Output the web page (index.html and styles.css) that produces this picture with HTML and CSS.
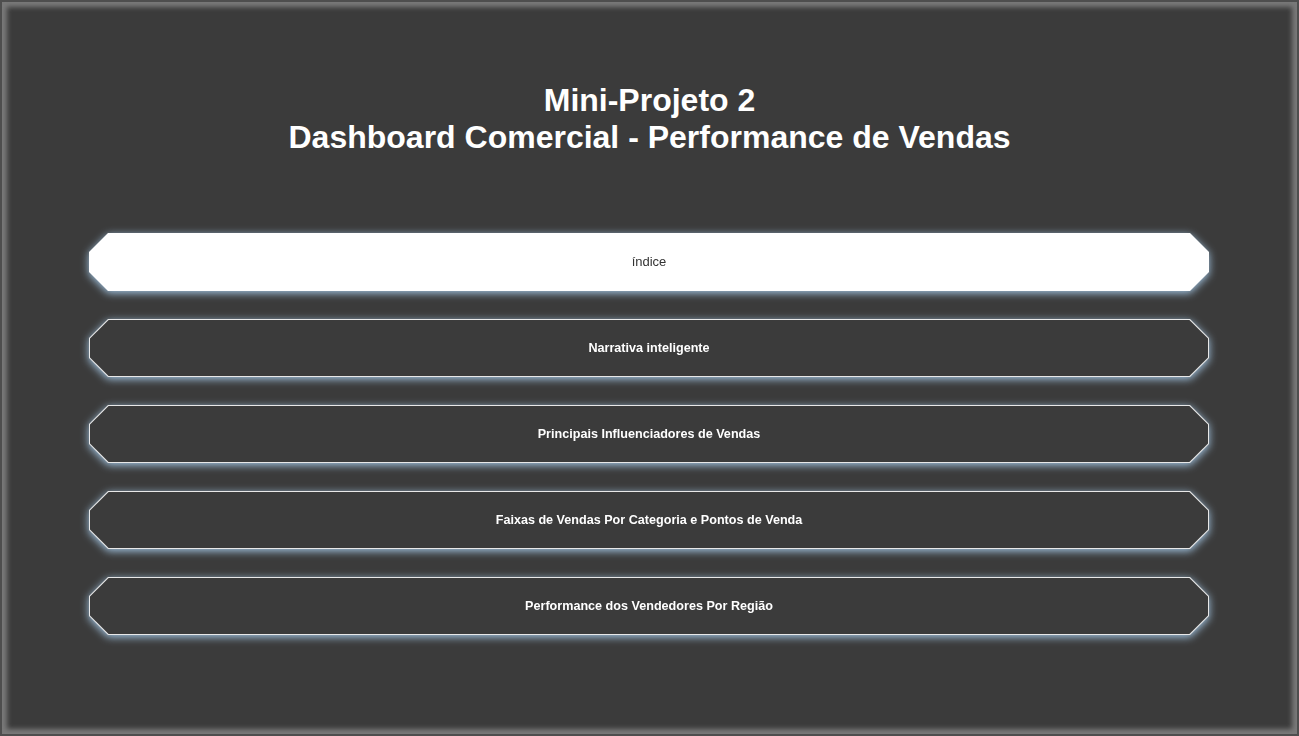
FILE: index.html
```html
<!DOCTYPE html>
<html lang="pt">
<head>
<meta charset="utf-8">
<title>Dashboard Comercial</title>
<link rel="stylesheet" href="styles.css">
</head>
<body>
<div class="frame">
  <h1 class="title">Mini-Projeto 2<br>Dashboard Comercial - Performance de Vendas</h1>
  <nav class="menu">
    <div class="btn-wrap"><div class="btn btn-active"><div class="btn-inner"><span>índice</span></div></div></div>
    <div class="btn-wrap"><div class="btn"><div class="btn-inner"><span>Narrativa inteligente</span></div></div></div>
    <div class="btn-wrap"><div class="btn"><div class="btn-inner"><span>Principais Influenciadores de Vendas</span></div></div></div>
    <div class="btn-wrap"><div class="btn"><div class="btn-inner"><span>Faixas de Vendas Por Categoria e Pontos de Venda</span></div></div></div>
    <div class="btn-wrap"><div class="btn"><div class="btn-inner"><span>Performance dos Vendedores Por Região</span></div></div></div>
  </nav>
</div>
</body>
</html>
```

FILE: styles.css
```css
html, body {
  margin: 0;
  padding: 0;
  background: #3b3b3b;
}
.frame {
  box-sizing: border-box;
  width: 1299px;
  height: 736px;
  background: #3b3b3b;
  border: 2px solid #4e4e4e;
  box-shadow: inset 0 0 5px 5px #7a7a7a;
  font-family: "Liberation Sans", Arial, sans-serif;
  padding-top: 80px;
  overflow: hidden;
}
.title {
  margin: 0;
  text-align: center;
  color: #ffffff;
  font-size: 32px;
  line-height: 37px;
  font-weight: bold;
}
.menu {
  display: flex;
  flex-direction: column;
  gap: 28px;
  margin-top: 77px;
  padding: 0 88px 0 87px;
}
.btn-wrap {
  filter: drop-shadow(0 2px 4px rgba(165, 200, 230, 1));
}
.btn {
  height: 58px;
  background: #e8e8e8;
  clip-path: polygon(19px 0, calc(100% - 19px) 0, 100% 19px, 100% calc(100% - 19px), calc(100% - 19px) 100%, 19px 100%, 0 calc(100% - 19px), 0 19px);
  padding: 1px;
  box-sizing: border-box;
}
.btn-inner {
  height: 100%;
  background: #3b3b3b;
  clip-path: polygon(18.6px 0, calc(100% - 18.6px) 0, 100% 18.6px, 100% calc(100% - 18.6px), calc(100% - 18.6px) 100%, 18.6px 100%, 0 calc(100% - 18.6px), 0 18.6px);
  display: flex;
  align-items: center;
  justify-content: center;
  color: #ffffff;
  font-size: 12.6px;
  font-weight: bold;
  padding-bottom: 1px;
  box-sizing: border-box;
}
.btn-active {
  background: #ffffff;
}
.btn-active .btn-inner {
  background: #ffffff;
  color: #333333;
  font-weight: normal;
  font-size: 13px;
}
```
